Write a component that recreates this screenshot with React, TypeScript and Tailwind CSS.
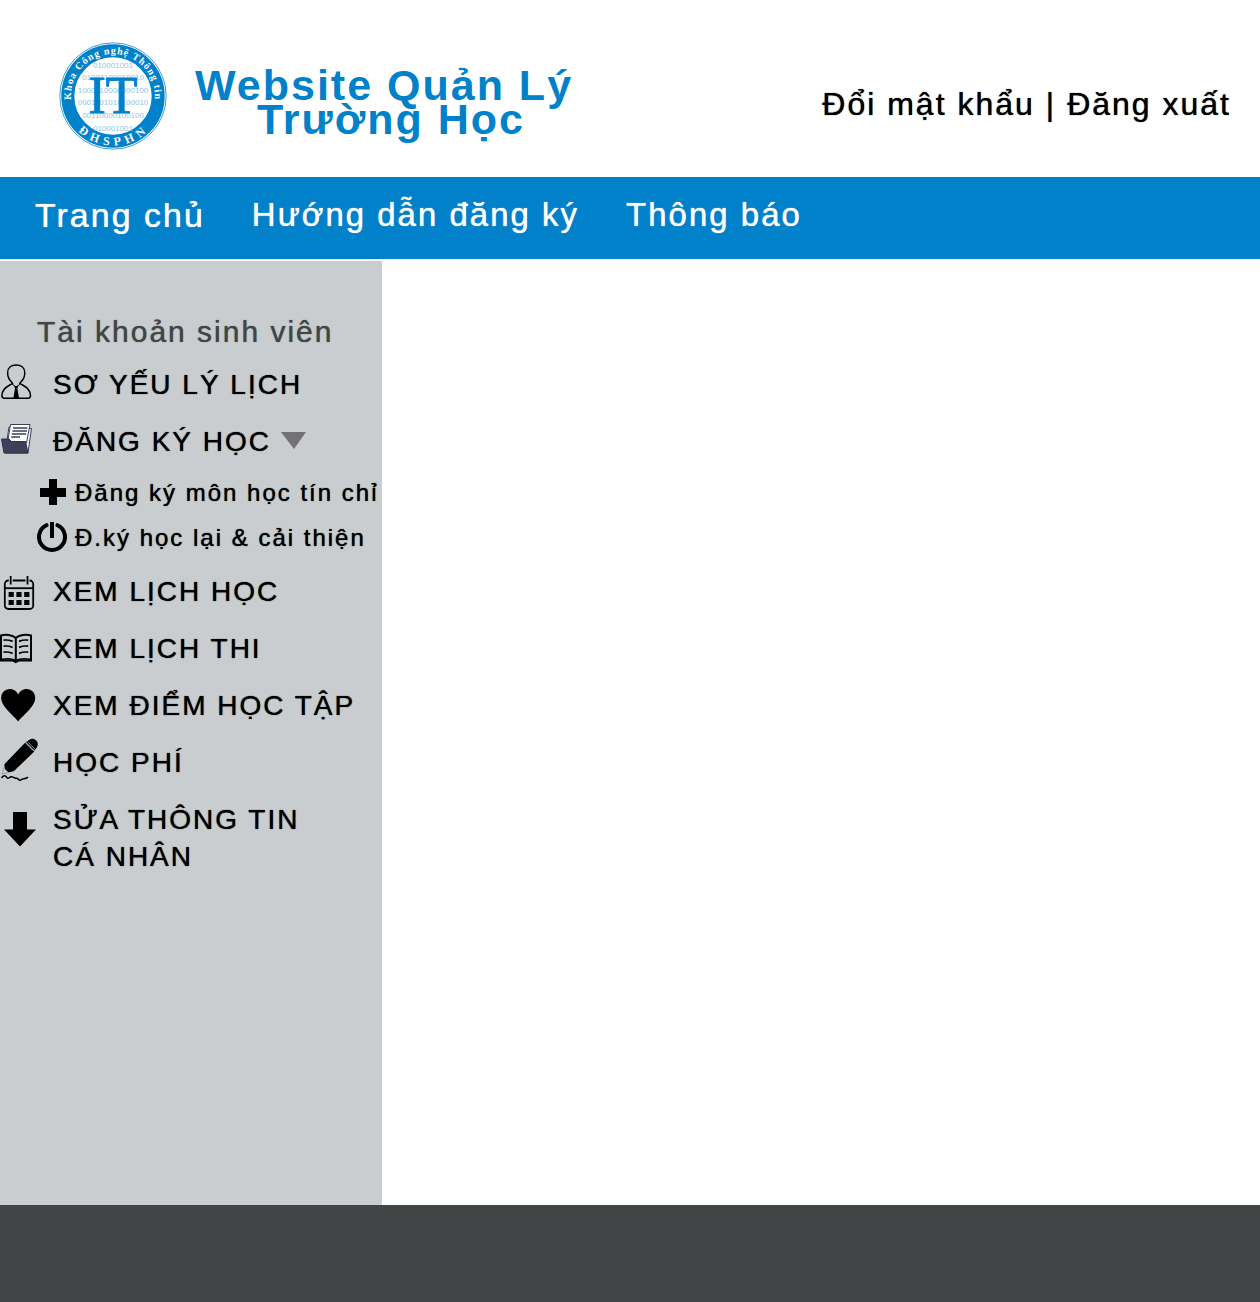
import type { ReactNode } from "react";

function Logo() {
  const rows = [
    { y: 26, digits: "010001001" },
    { y: 38, digits: "01001100010010" },
    { y: 51, digits: "1000110000000100" },
    { y: 63, digits: "0001101010100010" },
    { y: 76, digits: "00110000100100" },
    { y: 89, digits: "010001001" },
  ];
  return (
    <svg viewBox="0 0 108 108" className="size-[108px] shrink-0" role="img" aria-label="Khoa Công nghệ Thông tin ĐHSPHN">
      <defs>
        <path id="arc-top" d="M 13 63 A 42 42 0 1 1 95 63" />
        <path id="arc-bottom" d="M 4.5 54 A 49.5 49.5 0 0 0 103.5 54" />
      </defs>
      <circle cx="54" cy="54" r="53.2" fill="#fff" stroke="#3f9fd6" strokeWidth="1" />
      <circle cx="54" cy="54" r="45.2" fill="none" stroke="#0081c9" strokeWidth="13" />
      <g fill="#8fc4e8" fontFamily="Liberation Sans" fontSize="8" letterSpacing="0" textAnchor="middle">
        {rows.map((row) => (
          <text key={row.y} x="54" y={row.y}>
            {row.digits}
          </text>
        ))}
      </g>
      <text x="54" y="71" textAnchor="middle" fontFamily="Liberation Serif" fontSize="52" letterSpacing="0" fill="#0081c9" stroke="#0081c9" strokeWidth="1">
        IT
      </text>
      <text fill="#fff" fontFamily="Liberation Serif" fontWeight="bold" fontSize="10" letterSpacing="1" textAnchor="middle">
        <textPath href="#arc-top" startOffset="50%">
          Khoa Công nghệ Thông tin
        </textPath>
      </text>
      <text fill="#fff" fontFamily="Liberation Serif" fontWeight="bold" fontSize="12" letterSpacing="5" textAnchor="middle">
        <textPath href="#arc-bottom" startOffset="51%">
          ĐHSPHN
        </textPath>
      </text>
    </svg>
  );
}

function MenuIcon({ children }: { children: ReactNode }) {
  return (
    <svg viewBox="0 0 40 56" className="h-14 w-10 shrink-0" aria-hidden="true">
      {children}
    </svg>
  );
}

const userIcon = (
  <MenuIcon>
    <path
      d="M12.6 27.2C9.5 24.5 7.6 20.5 7.6 16.8C7.6 12 11 9 16.2 9C21.4 9 24.8 12 24.8 16.8C24.8 20.5 22.9 24.5 19.8 27.2C22 29.5 30.5 31 30.5 39.5C30.5 41.3 29.5 42.2 28 42.2H4.4C2.9 42.2 1.9 41.3 1.9 39.5C1.9 31 10.4 29.5 12.6 27.2Z"
      fill="none"
      stroke="#000"
      strokeWidth="1.5"
    />
    <path d="M12 28L16.2 31L20.4 28" fill="none" stroke="#000" strokeWidth="1" />
    <path d="M14.2 30H18.2L17.4 32.5L19 42H13.4L15 32.5Z" fill="#000" />
  </MenuIcon>
);

const folderIcon = (
  <MenuIcon>
    <path d="M9 14L31.5 15.5L28 40H5Z" fill="#eef0f5" stroke="#3c4058" strokeWidth="1" />
    <path d="M10.5 11.5H30L26.5 30H7.5Z" fill="#fff" stroke="#3c4058" strokeWidth="1" />
    <path d="M13 15H27.5M12.4 18H26.9M11.7 21H26.2M11.2 24H20" stroke="#3c4058" strokeWidth="1.3" />
    <path d="M1.5 26L9 26L11.5 28.5H25.5L28 40H4Z" fill="#3c4058" stroke="#2d3149" strokeWidth="1" />
  </MenuIcon>
);

const calendarIcon = (
  <MenuIcon>
    <g fill="none" stroke="#000" strokeWidth="1.8">
      <rect x="4.8" y="17.5" width="28.4" height="28.5" rx="3.5" />
      <path d="M5 25.2H33" />
    </g>
    <path d="M10.7 13.5V21.5M27.5 13.5V21.5" stroke="#cacdd0" strokeWidth="4" />
    <path d="M10.7 13V21.5M27.5 13V21.5" stroke="#000" strokeWidth="1.8" />
    <path d="M8.6 29H13.8V34H8.6ZM16.4 29H21.6V34H16.4ZM24.2 29H29.4V34H24.2ZM8.6 37H13.8V42H8.6ZM16.4 37H21.6V42H16.4ZM24.2 37H29.4V42H24.2Z" />
  </MenuIcon>
);

const bookIcon = (
  <MenuIcon>
    <path
      d="M15.8 18C12.5 14.5 5 14.2 1 15.5V40.5H13L15.8 42L18.6 40.5H31V15.5C27 14.2 19 14.5 15.8 18ZM15.8 18V40.5"
      fill="none"
      stroke="#000"
      strokeWidth="2"
    />
    <path d="M1 39.5C6 38.5 12 38.5 15.8 40.5C19.6 38.5 26 38.5 31 39.5" fill="none" stroke="#000" strokeWidth="1.6" />
    <path
      d="M3.5 20.2Q8 19.5 12.6 21.4M3.5 26.2Q8 25.5 12.6 27.4M3.5 32.2Q8 31.5 12.6 33.4M28.2 20.2Q23.5 19.5 19 21.4M28.2 26.2Q23.5 25.5 19 27.4M28.2 32.2Q23.5 31.5 19 33.4"
      fill="none"
      stroke="#000"
      strokeWidth="1.7"
    />
  </MenuIcon>
);

const heartIcon = (
  <MenuIcon>
    <path d="M18.2 44.5C15 39.5 1.2 30 1.2 21C1.2 15.5 5 12 9.8 12C13.8 12 16.8 14.2 18.2 17.8C19.6 14.2 22.6 12 26.6 12C31.4 12 35.2 15.5 35.2 21C35.2 30 21.4 39.5 18.2 44.5Z" />
  </MenuIcon>
);

const penIcon = (
  <MenuIcon>
    <path d="M25.3 8.6L34.3 17.6L14 37L9 38.6L4.8 36L4.4 30.2Z" />
    <path d="M26 8L29.5 5.8C31.7 4.2 34.5 4.8 36.2 6.6C38.2 8.6 38.4 11.2 36.8 13.4L34.4 16.4Z" />
    <path d="M26 9.4L33.4 16.8M27.6 7.8L35 15.2" stroke="#cacdd0" strokeWidth="0.7" />
    <path d="M4 33.8L2.2 40.2L8 38.6" fill="#cacdd0" stroke="#777" strokeWidth="0.6" />
    <path d="M1.5 44C3.5 41 5.5 41.5 6.5 43C7.5 45.5 9 43.5 11 42.8C13 42.3 14 44.5 16 44.2C19 43.8 18.5 47.5 21 45.8C23.5 44.3 25 45.5 28 43.2" fill="none" stroke="#000" strokeWidth="1.5" />
  </MenuIcon>
);

const arrowIcon = (
  <MenuIcon>
    <path d="M13 21H27V38.5H36L20 55.5L4 38.5H13Z" />
  </MenuIcon>
);

const rowClass = "flex min-h-[57px] items-start text-left";
const labelClass = "ml-[13px] pt-[10px] leading-[37px] text-shadow-[0_0_1px_currentColor]";

function MenuLink({ icon, children }: { icon: ReactNode; children: ReactNode }) {
  return (
    <li>
      <a href="#" className={rowClass}>
        {icon}
        <span className={labelClass}>{children}</span>
      </a>
    </li>
  );
}

export default function App() {
  return (
    <div className="flex min-h-screen flex-col bg-white font-['Liberation_Sans',Arial,sans-serif] tracking-[2px] text-black">
      <header className="flex items-center justify-between pt-[42px] pr-[29px] pb-[27px] pl-[59px]">
        <div className="flex items-center gap-7">
          <Logo />
          <h1 className="pt-3 text-center text-[43px] leading-[34px] font-bold text-[#0081c9]">
            Website Quản Lý
            <br />
            &nbsp;Trường Học
          </h1>
        </div>
        <div className="flex gap-[11px] pt-4 text-[32px] leading-10 text-shadow-[0_0_1px_currentColor]">
          <a href="#">Đổi mật khẩu</a>
          <span>|</span>
          <a href="#">Đăng xuất</a>
        </div>
      </header>

      <nav className="flex gap-[47px] bg-[#0081c9] px-[35px] pt-[18px] pb-6 text-[33px] leading-10 text-white text-shadow-[0_0_1px_currentColor]">
        <a href="#" className="text-[34px]">
          Trang chủ
        </a>
        <a href="#">Hướng dẫn đăng ký</a>
        <a href="#">Thông báo</a>
      </nav>

      <main className="mt-0.5 flex flex-1">
        <aside className="w-[382px] bg-[#cacdd0] pt-12 text-shadow-[0_0_1px_currentColor]">
          <h2 className="pb-0.5 pl-[37px] text-[30px] leading-[45px] text-[#424546]">Tài khoản sinh viên</h2>
          <ul className="text-[28px]">
            <MenuLink icon={userIcon}>SƠ YẾU LÝ LỊCH</MenuLink>
            <li>
              <button type="button" aria-expanded="true" className={rowClass}>
                {folderIcon}
                <span className={labelClass}>ĐĂNG KÝ HỌC</span>
                <svg viewBox="0 0 26 18" className="mt-[19px] ml-2.5 h-[18px] w-[26px]" aria-hidden="true">
                  <path d="M0 0H25L13 17Z" fill="#727176" />
                </svg>
              </button>
              <ul className="pb-[3px] pl-[37px] text-[24px] leading-[45px]">
                <li>
                  <a href="#" className="flex items-center gap-2 whitespace-nowrap">
                    <svg viewBox="0 0 30 32" className="h-8 w-[30px]" aria-hidden="true">
                      <path d="M12 2H20V11H29V20H20V28H12V20H3V11H12Z" />
                    </svg>
                    Đăng ký môn học tín chỉ
                  </a>
                </li>
                <li>
                  <a href="#" className="flex items-center gap-2 whitespace-nowrap">
                    <svg viewBox="0 2 30 32" className="h-8 w-[30px]" aria-hidden="true">
                      <path d="M9.5 5.2A13 13 0 1 0 20.5 5.2" fill="none" stroke="#000" strokeWidth="4" strokeLinecap="round" />
                      <path d="M15 2V18" stroke="#000" strokeWidth="4" />
                    </svg>
                    Đ.ký học lại &amp; cải thiện
                  </a>
                </li>
              </ul>
            </li>
            <MenuLink icon={calendarIcon}>XEM LỊCH HỌC</MenuLink>
            <MenuLink icon={bookIcon}>XEM LỊCH THI</MenuLink>
            <MenuLink icon={heartIcon}>XEM ĐIỂM HỌC TẬP</MenuLink>
            <MenuLink icon={penIcon}>HỌC PHÍ</MenuLink>
            <MenuLink icon={arrowIcon}>
              SỬA THÔNG TIN
              <br />
              CÁ NHÂN
            </MenuLink>
          </ul>
        </aside>
      </main>

      <footer className="h-[97px] bg-[#424546]" />
    </div>
  );
}
